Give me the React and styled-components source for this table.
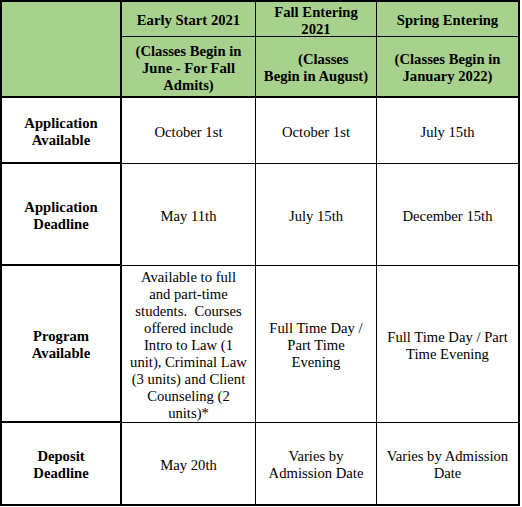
import React from "react";
import styled, { createGlobalStyle, css } from "styled-components";

const Global = createGlobalStyle`
  html, body { margin: 0; padding: 0; background: #ffffff; }
  body { font-family: "Liberation Serif", "Times New Roman", serif; color: #000; }
`;

const GREEN = "#a9d18e";
const PAD = [8, 7, 6, 6];

const Table = styled.div`
  display: grid;
  grid-template-columns: 120px 134px 121px 143px;
  grid-template-rows: 35px 61px 66px 102px 157px 83px;
  width: 518px;
  border-top: 2px solid #000;
  border-left: 2px solid #000;
  font-size: 14.67px;
  line-height: 17px;
`;

const Cell = styled.div`
  box-sizing: border-box;
  display: flex;
  align-items: center;
  justify-content: center;
  text-align: center;
  padding: 3px ${(p) => PAD[p.$col]}px 0;
  background: ${(p) => (p.$head ? GREEN : "#ffffff")};
  font-weight: ${(p) => (p.$bold ? 700 : 400)};
  border-right: ${(p) => (p.$col === 0 || p.$col === 3 ? 2 : 1)}px solid #000;
  border-bottom: ${(p) => (p.$thick || p.$col === 0 ? 2 : 1)}px solid #000;
  ${(p) =>
    p.$span &&
    css`
      grid-row: span ${p.$span};
    `}
`;

const CellText = styled.span`
  display: block;
  white-space: pre-line;
`;

const heads = [
  "Early Start 2021",
  "Fall Entering 2021",
  "Spring Entering",
];
const subHeads = [
  "(Classes Begin in June - For Fall Admits)",
  "\u00a0\u00a0\u00a0\u00a0(Classes\nBegin in August)",
  "(Classes Begin in January 2022)",
];

const rows = [
  {
    label: "Application Available",
    values: ["October 1st", "October 1st", "July 15th"],
  },
  {
    label: "Application Deadline",
    values: ["May 11th", "July 15th", "December 15th"],
  },
  {
    label: "Program Available",
    values: [
      "Available to full and part-time students.\u00a0 Courses offered include Intro to Law (1 unit), Criminal Law (3 units) and Client Counseling (2 units)*",
      "Full Time Day / Part Time Evening",
      "Full Time Day / Part Time Evening",
    ],
  },
  {
    label: "Deposit Deadline",
    values: ["May 20th", "Varies by Admission Date", "Varies by Admission Date"],
  },
];

export default function App() {
  return (
    <>
      <Global />
      <Table>
        <Cell $head $col={0} $span={2} $thick />
        {heads.map((h, i) => (
          <Cell key={h} $head $bold $col={i + 1}>
            <CellText>{h}</CellText>
          </Cell>
        ))}
        {subHeads.map((h, i) => (
          <Cell key={h} $head $bold $col={i + 1} $thick>
            <CellText>{h}</CellText>
          </Cell>
        ))}
        {rows.map((r, ri) => (
          <React.Fragment key={r.label}>
            <Cell $bold $col={0}>
              <CellText>{r.label}</CellText>
            </Cell>
            {r.values.map((v, vi) => (
              <Cell key={vi} $col={vi + 1} $thick={ri === rows.length - 1}>
                <CellText>{v}</CellText>
              </Cell>
            ))}
          </React.Fragment>
        ))}
      </Table>
    </>
  );
}
